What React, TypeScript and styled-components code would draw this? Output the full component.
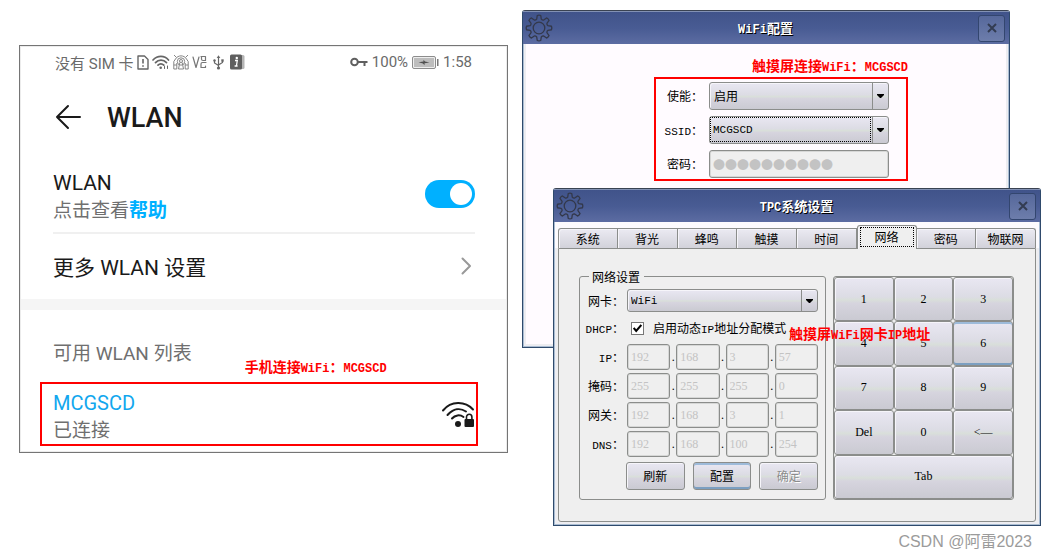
import React from 'react';
import styled, { createGlobalStyle, css } from 'styled-components';

const RED = '#ff0000';
const BLUE = '#00b0ff';
const LINE = '#8b8d8b';
const CJK = '"Noto Sans CJK SC", sans-serif';
const FACE = 'linear-gradient(180deg, #e9e7f2 0%, #dcdce4 45%, #d9dfda 52%, #d6d4de 60%, #cacad2 100%)';

const Global = createGlobalStyle`
  *, *::before, *::after { box-sizing: border-box; }
  body { margin: 0; background: #fff; }
  button, input, select { margin: 0; font: inherit; color: inherit; }
`;

const Page = styled.main`
  display: grid;
  grid-template-columns: 489fr 519fr;
  column-gap: 14px;
  align-items: start;
  padding: 10px 5px 0 19px;
`;

/* ---------- shared annotation parts ---------- */

const Note = styled.p<{ $floating?: boolean; $end?: boolean }>`
  margin: 0;
  color: ${RED};
  font: bold 14px/16px ${CJK};
  text-align: ${(p) => (p.$end ? 'right' : 'left')};
  white-space: nowrap;
  ${(p) =>
    p.$floating &&
    css`
      position: absolute;
      left: 230px;
      top: 76px;
      z-index: 2;
      pointer-events: none;
    `}
`;

const Latin = styled.span<{ $size?: number }>`
  font-family: 'Liberation Mono', monospace;
  font-size: ${(p) => p.$size ?? 11}px;
  line-height: 0;
`;

/* ---------- phone ---------- */

const Phone = styled.section`
  margin-top: 35px;
  border: 1px solid #757575;
  box-shadow: inset 0 0 0 1px #ececec;
  font-family: Roboto, ${CJK};
  color: #1a1a1a;
  background: #fff;
`;

const StatusBar = styled.div`
  display: flex;
  justify-content: space-between;
  align-items: center;
  height: 34px;
  padding: 0 35px 2px;
  color: #6a6a6a;
  font-size: 15px;
`;

const StatusGroup = styled.div<{ $gap: number }>`
  display: flex;
  align-items: center;
  gap: ${(p) => p.$gap}px;
  white-space: nowrap;
  svg { flex: none; display: block; }
`;

const Header = styled.header`
  display: flex;
  align-items: center;
  gap: 25px;
  height: 76px;
  padding-left: 35px;
`;

const PlainButton = styled.button`
  display: block;
  padding: 0 0 2px;
  border: 0;
  background: none;
  svg { display: block; }
`;

const ScreenTitle = styled.h1`
  margin: 0;
  font-size: 27px;
  line-height: 32px;
  font-weight: 500;
`;

const ToggleRow = styled.div`
  display: flex;
  justify-content: space-between;
  align-items: center;
  margin: 0 32px 0 33px;
  height: 78px;
  border-bottom: 2px solid #f0f0f0;
`;

const TextPair = styled.div`
  padding-top: 6px;
`;

const Primary = styled.div<{ $accent?: boolean }>`
  display: block;
  font-size: ${(p) => (p.$accent ? 20 : 21)}px;
  line-height: 28px;
  color: ${(p) => (p.$accent ? '#12a7ee' : '#1a1a1a')};
`;

const Secondary = styled.div`
  font-size: 19px;
  line-height: 28px;
  color: #6f6f6f;
`;

const HelpLink = styled.a`
  color: ${BLUE};
  font-weight: 700;
  text-decoration: none;
`;

const Toggle = styled.input`
  appearance: none;
  width: 50px;
  height: 28px;
  padding: 3px;
  border-radius: 14px;
  background: ${BLUE};
  &::before {
    content: '';
    display: block;
    width: 22px;
    height: 22px;
    margin-left: auto;
    border-radius: 50%;
    background: #fff;
  }
`;

const MoreRow = styled.button`
  display: flex;
  justify-content: space-between;
  align-items: center;
  width: 100%;
  height: 65px;
  padding: 0 35px 2px 33px;
  border: 0;
  background: none;
  font-size: 21px;
  text-align: left;
`;

const Band = styled.div`
  height: 11px;
  margin: 0 1px;
  background: #f5f5f5;
`;

const ListHeading = styled.div`
  display: flex;
  align-items: flex-end;
  gap: 53px;
  height: 64px;
  padding-left: 33px;
`;

const ListTitle = styled.h2`
  margin: 0;
  padding-bottom: 6px;
  font-size: 19px;
  line-height: 28px;
  font-weight: 400;
  color: #6f6f6f;
`;

const Network = styled.div`
  display: flex;
  justify-content: space-between;
  align-items: center;
  height: 64px;
  margin: 8px 29px 6px 20px;
  padding: 0 1px 0 11px;
  border: 2px solid ${RED};
`;

/* ---------- desktop windows ---------- */

const Desktop = styled.section`
  font: 12px/14px ${CJK};
  color: #000;
`;

const Window = styled.div<{ $front?: boolean }>`
  position: relative;
  margin: ${(p) => (p.$front ? '-160px 0 0 31px' : '0 31px 0 0')};
  border: 1px solid #2f4a6c;
  border-top-color: #3a4352;
  border-radius: 3px 3px 0 0;
  background: ${(p) => (p.$front ? '#efefef' : '#fffbff')};
  box-shadow: inset 0 0 0 1px #a9bcd2, inset 0 0 0 3px #ededf1;
`;

const TitleBar = styled.div`
  display: grid;
  grid-template-columns: 28px 1fr 28px;
  align-items: center;
  height: 33px;
  padding: 0 3px 0 2px;
  border-top: 1px solid #8291b4;
  background: linear-gradient(180deg, #40538a, #485b93 50%, #5c6ca2);
  color: #fff;
  font-size: 13px;
  font-weight: 700;
  text-align: center;
  text-shadow: 1px 1px 0 #000;
  svg { display: block; }
`;

const CloseButton = styled.button`
  display: grid;
  place-items: center;
  width: 27px;
  height: 27px;
  padding: 0;
  border: 1px solid #33466f;
  border-radius: 3px;
  background: linear-gradient(180deg, #56689b, #6d7dab);
`;

const WifiBody = styled.div`
  padding: 13px 101px 166px 131px;
`;

const WifiForm = styled.div`
  display: grid;
  grid-template-columns: 36px 1fr;
  gap: 6px;
  align-items: center;
  margin-top: 4px;
  padding: 3px 17px 1px 11px;
  border: 2px solid ${RED};
`;

const Label = styled.label`
  justify-self: end;
  white-space: nowrap;
`;

const SelectBox = styled.div<{ $tall?: boolean }>`
  position: relative;
  display: grid;
  height: ${(p) => (p.$tall ? 28 : 23)}px;
  svg {
    position: absolute;
    right: 4px;
    top: ${(p) => (p.$tall ? 12 : 10)}px;
    pointer-events: none;
  }
  &::after {
    content: '';
    position: absolute;
    right: 16px;
    top: 1px;
    bottom: 1px;
    width: 1px;
    background: ${LINE};
  }
`;

const Select = styled.select<{ $latin?: boolean }>`
  appearance: none;
  width: 100%;
  height: 100%;
  padding: 0 18px 0 4px;
  border: 1px solid ${LINE};
  border-radius: 3px;
  background: ${FACE};
  box-shadow: inset 1px 1px 0 #f6f5fa;
  ${(p) => p.$latin && "padding-left: 3px; font-family: 'Liberation Mono', monospace; font-size: 11px;"}
`;

const FocusRing = styled.span`
  position: absolute;
  inset: 1px 18px 2px 1px;
  border: 1px dotted #000;
  pointer-events: none;
`;

const Field = styled.input<{ $tall?: boolean }>`
  width: 100%;
  min-width: 0;
  height: ${(p) => (p.$tall ? 28 : 26)}px;
  padding: 0 3px;
  border: 1px solid ${LINE};
  border-radius: 3px;
  background: #efefef;
  box-shadow: inset 0 0 0 1px #d6d7d6;
  color: #c3c3c3;
  font: ${(p) => (p.$tall ? `12px ${CJK}` : "12px 'Liberation Serif', serif")};
`;

const Tabs = styled.div`
  display: grid;
  grid-template-columns: repeat(8, minmax(0, 1fr));
  align-items: end;
  height: 26px;
  margin: 0 1px;
  padding: 0 3px;
  background: #fdfbfe;
`;

const Tab = styled.button<{ $active?: boolean }>`
  height: 20px;
  padding: 0;
  border: 1px solid ${LINE};
  border-width: 1px 1px 0 0;
  background: linear-gradient(180deg, #ebeaf2, #d2d2da);
  box-shadow: inset 1px 1px 0 #f6f5fa;
  &:first-child { border-left-width: 1px; border-top-left-radius: 3px; }
  &:last-child { border-top-right-radius: 3px; }
  ${(p) =>
    p.$active &&
    css`
      height: 24px;
      margin-bottom: -1px;
      padding: 1px 2px 2px;
      border-left-width: 1px;
      border-radius: 3px 3px 0 0;
      background: #efefef;
      z-index: 1;
      span { display: block; border: 1px dotted #000; line-height: 18px; }
    `}
`;

const Panel = styled.div`
  position: relative;
  display: grid;
  grid-template-columns: minmax(0, 247fr) minmax(0, 181fr);
  gap: 7px;
  margin: 0 4px 3px;
  padding: 21px 21px 21px 20px;
  border: 1px solid ${LINE};
  border-radius: 0 0 3px 3px;
  background: #efefef;
`;

const NetFieldset = styled.fieldset`
  min-width: 0;
  display: grid;
  grid-template-columns: 36px 1fr;
  gap: 3px;
  align-items: center;
  margin: 0;
  padding: 6px 7px 9px 8px;
  border: 1px solid ${LINE};
  border-radius: 3px;
`;

const Legend = styled.legend`
  margin-left: 1px;
  padding: 0 4px 0 3px;
  line-height: 13px;
`;

const Octets = styled.div`
  display: grid;
  grid-template-columns: 1fr 6px 1fr 6px 1fr 6px 1fr;
  align-items: center;
  font-family: 'Liberation Serif', serif;
  text-align: center;
`;

const CheckLine = styled.div`
  display: flex;
  align-items: center;
  gap: 9px;
  height: 26px;
  padding-left: 4px;
  white-space: nowrap;
`;

const CheckWrap = styled.span`
  position: relative;
  display: grid;
  svg { position: absolute; left: 2px; top: 2px; pointer-events: none; }
`;

const Check = styled.input`
  appearance: none;
  width: 13px;
  height: 13px;
  border: 1px solid #777;
  background: #fff;
`;

const Actions = styled.div`
  grid-column: 2;
  display: grid;
  grid-template-columns: 1fr 1fr 1fr;
  gap: 8px;
  margin-top: 2px;
  margin-left: -1px;
`;

const hot = css`
  box-shadow: inset 0 2px 0 #9dbbda, inset 0 -2px 0 #7c9fc1;
`;

const ActionButton = styled.button<{ $hot?: boolean }>`
  height: 28px;
  padding: 0;
  border: 1px solid ${LINE};
  border-radius: 3px;
  background: ${FACE};
  box-shadow: inset 1px 1px 0 #f6f5fa;
  ${(p) => p.$hot && hot}
  &:disabled { color: #8c8c8c; text-shadow: 1px 1px 0 #fff; }
`;

const Keypad = styled.div`
  display: grid;
  grid-template-columns: repeat(3, 1fr);
  grid-auto-rows: 1fr;
  margin-top: 6px;
  border: 1px solid ${LINE};
  border-radius: 3px;
`;

const Key = styled.button<{ $wide?: boolean; $hot?: boolean }>`
  padding: 0;
  border: 1px solid ${LINE};
  border-radius: 3px;
  background: ${FACE};
  box-shadow: inset 1px 1px 0 #f6f5fa;
  font: 12px 'Liberation Serif', serif;
  ${(p) => p.$wide && 'grid-column: 1 / -1;'}
  ${(p) => p.$hot && hot}
`;

const Watermark = styled.p`
  margin: 6px 9px 0 0;
  color: #9b9b9b;
  font: 16px/20px 'Liberation Sans', ${CJK};
  text-align: right;
`;

/* ---------- icons ---------- */

const gearPath = (() => {
  const pts: string[] = [];
  for (let i = 0; i < 8; i += 1) {
    const a = (i * Math.PI) / 4;
    const at = (r: number, d: number) =>
      `${(14 + r * Math.sin(a + d)).toFixed(2)} ${(14 - r * Math.cos(a + d)).toFixed(2)}`;
    pts.push(
      `${i ? 'L' : 'M'}${at(9.2, -0.25)} L${at(12.6, -0.14)} Q${at(13.2, 0)} ${at(12.6, 0.14)} L${at(9.2, 0.25)} Q${at(8.4, 0.39)} ${at(9.2, 0.53)}`,
    );
  }
  return `${pts.join(' ')} Z`;
})();

const Gear = () => (
  <svg width="28" height="28" viewBox="0 0 28 28" fill="none" stroke="#33384a" strokeWidth="1.3" strokeLinejoin="round">
    <path d={gearPath} />
    <circle cx="14" cy="14" r="5.8" />
  </svg>
);

const Cross = () => (
  <svg width="10" height="10" viewBox="0 0 10 10" stroke="#333c52" strokeWidth="2">
    <path d="M1 1l8 8M9 1l-8 8" />
  </svg>
);

const Caret = () => (
  <svg width="9" height="5" viewBox="0 0 9 5">
    <path d="M1 0h7v1L5 4H4L1 1z" fill="#000" />
  </svg>
);

const BackArrow = () => (
  <svg width="27" height="26" viewBox="0 0 27 26" fill="none" stroke="#1a1a1a" strokeWidth="2" strokeLinecap="round" strokeLinejoin="round">
    <path d="M25 13H2M13 2L2 13l11 11" />
  </svg>
);

const Chevron = () => (
  <svg width="11" height="18" viewBox="0 0 11 18" fill="none" stroke="#999" strokeWidth="2" strokeLinecap="round" strokeLinejoin="round">
    <path d="M1.5 1.5L9 9l-7.500 7.500" />
  </svg>
);

const SimAlert = () => (
  <svg width="12" height="15" viewBox="0 0 12 15" fill="none" stroke="#666" strokeWidth="1.4" strokeLinejoin="round">
    <path d="M1 1h6.500L11 4.500V14H1z" />
    <path d="M6 4v4.500M6 10.200v1.600" strokeWidth="1.600" />
  </svg>
);

const StatusWifi = () => (
  <svg width="18" height="15" viewBox="0 0 18 15" fill="none" stroke="#666" strokeWidth="1.700" strokeLinecap="round">
    <path d="M1 5C5.500 .2 12.500 .2 16.500 5M3.500 7.600c3-3.300 8-3.300 11 0M6 10.200c1.600-1.700 4.200-1.700 5.800 0" />
    <circle cx="8.700" cy="12.800" r="1.300" fill="#666" stroke="none" />
    <path d="M12.500 11.500v2M15.500 11v2.500" strokeWidth="1" />
  </svg>
);

const Hotspot = () => (
  <svg width="16" height="16" viewBox="0 0 16 16" fill="none" stroke="#858585" strokeWidth="1">
    <path d="M1 1l2.500 2.500M15 1l-2.500 2.500M2.500 5C5 .8 11 .8 13.500 5M.8 15V7.500L2.500 5M15.200 15V7.500L13.500 5M.8 15h3V9M15.200 15h-3V9M.8 11h3M15.200 11h-3" />
    <circle cx="8" cy="7.500" r="3.700" />
    <circle cx="8" cy="7" r="1.500" />
    <path d="M6.800 8.500L5.500 15h5L9.200 8.500" />
  </svg>
);

const VoIcon = () => (
  <svg width="15" height="14" viewBox="0 0 15 14" fill="none" stroke="#777" strokeWidth="1.200" strokeLinecap="round" strokeLinejoin="round">
    <path d="M1 2l3 10.500L7 2" />
    <path d="M9 1.500h4.500v4H11a1.500 1.500 0 0 1-1.500-1.500V1.500M14 7.500H10.500A1.500 1.500 0 0 0 9 9v3.500h4.500V11" />
  </svg>
);

const Usb = () => (
  <svg width="17" height="15" viewBox="-3 0 17 15" fill="none" stroke="#666" strokeWidth="1.200">
    <path d="M5.500 2v10M1.500 5.500V8l4 2.500M9.500 5.500v2l-4 2.500" />
    <path d="M3.700 3L5.500.2 7.300 3z" fill="#666" stroke="none" />
    <circle cx="5.500" cy="13" r="1.600" fill="#666" stroke="none" />
    <circle cx="1.500" cy="5.500" r="1.200" fill="#666" stroke="none" />
    <path d="M8.300 4.300h2.400v2.400H8.300z" fill="#666" stroke="none" />
  </svg>
);

const InfoBadge = () => (
  <svg width="15" height="16" viewBox="0 0 15 16">
    <rect x="3" y="1" width="11.500" height="14" rx="1.500" fill="#b5b5b5" />
    <rect x="0" y=".5" width="12" height="15" rx="1.500" fill="#5f5f5f" />
    <circle cx="6.800" cy="4" r="1.200" fill="#fff" />
    <path d="M5 6.500h2.300L6.400 12M4.600 12h3" stroke="#fff" strokeWidth="1.300" fill="none" />
  </svg>
);

const KeyIcon = () => (
  <svg width="18" height="10" viewBox="0 0 18 10" fill="none" stroke="#5f5f5f" strokeWidth="2">
    <circle cx="4.500" cy="5" r="3.300" />
    <path d="M8 5h9.500M14.500 5v4" />
  </svg>
);

const Battery = () => (
  <svg width="27" height="13" viewBox="0 0 27 13">
    <rect x=".5" y=".5" width="23" height="12" rx="1.500" fill="#eee" stroke="#8c8c8c" />
    <rect x="2" y="2" width="20" height="9" fill="#bdbdbd" />
    <path d="M6.500 6.200l5-.6V3.700l1.500 1.700 4.500 1.200-5 .6v2l-1.500-1.800z" fill="#4f4f4f" />
    <rect x="25" y="3" width="1.500" height="7" fill="#777" />
  </svg>
);

const LockedWifi = () => (
  <svg width="34" height="27" viewBox="0 0 34 27" fill="none" stroke="#1a1a1a" strokeWidth="2" strokeLinecap="round">
    <path d="M2 9.500C10-.2 24-.2 32 8.500M6.500 14C12.500 7.200 19.500 6.800 25 10.500M11 17.500c3-3.600 8-4.200 11.500-1.500" />
    <circle cx="17" cy="23" r="3" fill="#1a1a1a" stroke="none" />
    <rect x="23.500" y="18" width="9.500" height="8" rx="1" fill="#1a1a1a" stroke="none" />
    <path d="M25.500 18.500V16a2.700 2.700 0 0 1 5.400 0v2.500" strokeWidth="1.600" />
  </svg>
);

const Tick = () => (
  <svg width="9" height="9" viewBox="0 0 9 9" fill="none" stroke="#000" strokeWidth="2">
    <path d="M.7 4l2.500 3L8.300 1" />
  </svg>
);

/* ---------- data ---------- */

const TABS = ['系统', '背光', '蜂鸣', '触摸', '时间', '网络', '密码', '物联网'];
const ADDRESSES = [
  { label: 'IP', latin: true, parts: ['192', '168', '3', '57'] },
  { label: '掩码', latin: false, parts: ['255', '255', '255', '0'] },
  { label: '网关', latin: false, parts: ['192', '168', '3', '1'] },
  { label: 'DNS', latin: true, parts: ['192', '168', '100', '254'] },
];
const KEYS = ['1', '2', '3', '4', '5', '6', '7', '8', '9', 'Del', '0', '<—', 'Tab'];

const PhoneScreen = () => (
  <Phone>
    <StatusBar>
      <StatusGroup $gap={3}>
        <span>没有 SIM 卡</span>
        <SimAlert />
        <StatusWifi />
        <Hotspot />
        <VoIcon />
        <Usb />
        <InfoBadge />
      </StatusGroup>
      <StatusGroup $gap={4}>
        <KeyIcon />
        <span>100%</span>
        <Battery />
        <span>1:58</span>
      </StatusGroup>
    </StatusBar>
    <Header>
      <PlainButton aria-label="返回"><BackArrow /></PlainButton>
      <ScreenTitle>WLAN</ScreenTitle>
    </Header>
    <ToggleRow>
      <TextPair>
        <Primary as="label" htmlFor="wlan">WLAN</Primary>
        <Secondary>点击查看<HelpLink href="#help">帮助</HelpLink></Secondary>
      </TextPair>
      <Toggle id="wlan" type="checkbox" role="switch" defaultChecked />
    </ToggleRow>
    <MoreRow>
      <span>更多 WLAN 设置</span>
      <Chevron />
    </MoreRow>
    <Band />
    <ListHeading>
      <ListTitle>可用 WLAN 列表</ListTitle>
      <Note>手机连接<Latin $size={12}>WiFi</Latin>：<Latin $size={12}>MCGSCD</Latin></Note>
    </ListHeading>
    <Network>
      <TextPair>
        <Primary $accent>MCGSCD</Primary>
        <Secondary>已连接</Secondary>
      </TextPair>
      <LockedWifi />
    </Network>
  </Phone>
);

const WifiWindow = () => (
  <Window>
    <TitleBar>
      <Gear />
      <span><Latin $size={12}>WiFi</Latin>配置</span>
      <CloseButton aria-label="关闭"><Cross /></CloseButton>
    </TitleBar>
    <WifiBody>
      <Note $end>触摸屏连接<Latin $size={12}>WiFi</Latin>：<Latin $size={12}>MCGSCD</Latin></Note>
      <WifiForm>
        <Label htmlFor="enable">使能：</Label>
        <SelectBox $tall>
          <Select id="enable"><option>启用</option></Select>
          <Caret />
        </SelectBox>
        <Label htmlFor="ssid"><Latin>SSID</Latin>：</Label>
        <SelectBox $tall>
          <Select id="ssid" $latin><option>MCGSCD</option></Select>
          <FocusRing />
          <Caret />
        </SelectBox>
        <Label htmlFor="secret">密码：</Label>
        <Field id="secret" $tall disabled defaultValue="●●●●●●●●●●" />
      </WifiForm>
    </WifiBody>
  </Window>
);

const TpcWindow = () => (
  <Window $front>
    <TitleBar>
      <Gear />
      <span><Latin $size={12}>TPC</Latin>系统设置</span>
      <CloseButton aria-label="关闭"><Cross /></CloseButton>
    </TitleBar>
    <Tabs role="tablist">
      {TABS.map((name) => (
        <Tab key={name} role="tab" $active={name === '网络'} aria-selected={name === '网络'}>
          <span>{name}</span>
        </Tab>
      ))}
    </Tabs>
    <Panel role="tabpanel">
      <NetFieldset>
        <Legend>网络设置</Legend>
        <Label htmlFor="card">网卡：</Label>
        <SelectBox>
          <Select id="card" $latin><option>WiFi</option></Select>
          <Caret />
        </SelectBox>
        <Label htmlFor="dhcp"><Latin>DHCP</Latin>：</Label>
        <CheckLine>
          <CheckWrap><Check id="dhcp" type="checkbox" defaultChecked /><Tick /></CheckWrap>
          <label htmlFor="dhcp">启用动态<Latin>IP</Latin>地址分配模式</label>
        </CheckLine>
        {ADDRESSES.map(({ label, latin, parts }) => (
          <React.Fragment key={label}>
            <Label htmlFor={`${label}-0`}>{latin ? <Latin>{label}</Latin> : label}：</Label>
            <Octets>
              {parts.map((part, i) => (
                <React.Fragment key={i}>
                  {i > 0 && <span>.</span>}
                  <Field id={`${label}-${i}`} aria-label={`${label} ${i + 1}`} disabled defaultValue={part} />
                </React.Fragment>
              ))}
            </Octets>
          </React.Fragment>
        ))}
        <Actions>
          <ActionButton>刷新</ActionButton>
          <ActionButton $hot>配置</ActionButton>
          <ActionButton disabled>确定</ActionButton>
        </Actions>
      </NetFieldset>
      <Keypad>
        {KEYS.map((k) => (
          <Key key={k} $wide={k === 'Tab'} $hot={k === '6'}>{k}</Key>
        ))}
      </Keypad>
      <Note $floating>触摸屏<Latin $size={12}>WiFi</Latin>网卡<Latin $size={12}>IP</Latin>地址</Note>
    </Panel>
  </Window>
);

export default function App() {
  return (
    <>
      <Global />
      <Page lang="zh-CN">
        <PhoneScreen />
        <Desktop>
          <WifiWindow />
          <TpcWindow />
          <Watermark>CSDN @阿雷2023</Watermark>
        </Desktop>
      </Page>
    </>
  );
}
